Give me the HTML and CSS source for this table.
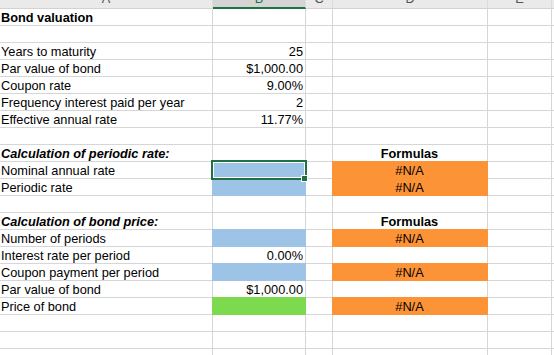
FILE: index.html
```html
<!DOCTYPE html>
<html>
<head>
<meta charset="utf-8">
<link rel="stylesheet" href="styles.css">
</head>
<body>
<div class="sheet">
  <div class="row">
    <div class="h"><span>A</span></div>
    <div class="h sel-col"><span>B</span></div>
    <div class="h"><span>C</span></div>
    <div class="h"><span>D</span></div>
    <div class="h"><span>E</span></div>
    <div class="h"></div>
  </div>
  <div class="row">
    <div class="c b">Bond valuation</div><div class="c"></div><div class="c"></div><div class="c"></div><div class="c"></div><div class="c"></div>
  </div>
  <div class="row">
    <div class="c"></div><div class="c"></div><div class="c"></div><div class="c"></div><div class="c"></div><div class="c"></div>
  </div>
  <div class="row">
    <div class="c">Years to maturity</div><div class="c r">25</div><div class="c"></div><div class="c"></div><div class="c"></div><div class="c"></div>
  </div>
  <div class="row">
    <div class="c">Par value of bond</div><div class="c r">$1,000.00</div><div class="c"></div><div class="c"></div><div class="c"></div><div class="c"></div>
  </div>
  <div class="row">
    <div class="c">Coupon rate</div><div class="c r">9.00%</div><div class="c"></div><div class="c"></div><div class="c"></div><div class="c"></div>
  </div>
  <div class="row">
    <div class="c">Frequency interest paid per year</div><div class="c r">2</div><div class="c"></div><div class="c"></div><div class="c"></div><div class="c"></div>
  </div>
  <div class="row">
    <div class="c">Effective annual rate</div><div class="c r">11.77%</div><div class="c"></div><div class="c"></div><div class="c"></div><div class="c"></div>
  </div>
  <div class="row">
    <div class="c"></div><div class="c"></div><div class="c"></div><div class="c"></div><div class="c"></div><div class="c"></div>
  </div>
  <div class="row">
    <div class="c bi">Calculation of periodic rate:</div><div class="c"></div><div class="c"></div><div class="c b m">Formulas</div><div class="c"></div><div class="c"></div>
  </div>
  <div class="row">
    <div class="c">Nominal annual rate</div><div class="c blue active"><span class="sel-box"></span><span class="sel-handle"></span></div><div class="c"></div><div class="c orange m">#N/A</div><div class="c"></div><div class="c"></div>
  </div>
  <div class="row">
    <div class="c">Periodic rate</div><div class="c blue"></div><div class="c"></div><div class="c orange m">#N/A</div><div class="c"></div><div class="c"></div>
  </div>
  <div class="row">
    <div class="c"></div><div class="c"></div><div class="c"></div><div class="c"></div><div class="c"></div><div class="c"></div>
  </div>
  <div class="row">
    <div class="c bi">Calculation of bond price:</div><div class="c"></div><div class="c"></div><div class="c b m">Formulas</div><div class="c"></div><div class="c"></div>
  </div>
  <div class="row">
    <div class="c">Number of periods</div><div class="c blue"></div><div class="c"></div><div class="c orange m">#N/A</div><div class="c"></div><div class="c"></div>
  </div>
  <div class="row">
    <div class="c">Interest rate per period</div><div class="c r">0.00%</div><div class="c"></div><div class="c"></div><div class="c"></div><div class="c"></div>
  </div>
  <div class="row">
    <div class="c">Coupon payment per period</div><div class="c blue"></div><div class="c"></div><div class="c orange m">#N/A</div><div class="c"></div><div class="c"></div>
  </div>
  <div class="row">
    <div class="c">Par value of bond</div><div class="c r">$1,000.00</div><div class="c"></div><div class="c"></div><div class="c"></div><div class="c"></div>
  </div>
  <div class="row">
    <div class="c">Price of bond</div><div class="c green"></div><div class="c"></div><div class="c orange m">#N/A</div><div class="c"></div><div class="c"></div>
  </div>
  <div class="row">
    <div class="c"></div><div class="c"></div><div class="c"></div><div class="c"></div><div class="c"></div><div class="c"></div>
  </div>
  <div class="row">
    <div class="c"></div><div class="c"></div><div class="c"></div><div class="c"></div><div class="c"></div><div class="c"></div>
  </div>
  <div class="row">
    <div class="c"></div><div class="c"></div><div class="c"></div><div class="c"></div><div class="c"></div><div class="c"></div>
  </div>
</div>
</body>
</html>
```

FILE: styles.css
```css
html, body {
  margin: 0;
  padding: 0;
  background: #fff;
  overflow: hidden;
  height: 355px;
}

.sheet {
  display: grid;
  grid-template-columns: 213px 93px 27px 155px 64px 1fr;
  grid-template-rows: 9px;
  grid-auto-rows: 17px;
  font-family: "Liberation Sans", Arial, sans-serif;
  font-size: 12.75px;
  color: #000;
}

.row {
  display: contents;
}

.h {
  box-sizing: border-box;
  background: #eaeaea;
  border-right: 1px solid #dcdcdc;
  border-bottom: 1px solid #d2d2d2;
  overflow: hidden;
  text-align: center;
  color: #555;
}

.h span {
  display: block;
  line-height: 12px;
  margin-top: -7px;
}

.h.sel-col {
  background: #d4d4d4;
  border-bottom: 2px solid #1e7145;
  color: #1e7145;
}

.c {
  box-sizing: border-box;
  border-right: 1px solid #d6d6d6;
  border-bottom: 1px solid #d6d6d6;
  padding: 0 2px 0 1px;
  line-height: 18px;
  white-space: nowrap;
  position: relative;
}

.b { font-weight: bold; }
.bi { font-weight: bold; font-style: italic; }
.r { text-align: right; }
.m { text-align: center; }

.blue {
  background: #9dc3e6;
  border-color: #9dc3e6;
  box-shadow: -1px 0 0 #9dc3e6, 0 -1px 0 #9dc3e6, -1px -1px 0 #9dc3e6;
}

.orange {
  background: #fd9337;
  border-color: #fd9337;
  box-shadow: -1px 0 0 #fd9337, 0 -1px 0 #fd9337, -1px -1px 0 #fd9337;
}

.green {
  background: #7dda4e;
  border-color: #7dda4e;
  box-shadow: -1px 0 0 #7dda4e, 0 -1px 0 #7dda4e, -1px -1px 0 #7dda4e;
}

.active { z-index: 2; }

.sel-box {
  position: absolute;
  top: -2px;
  left: -2px;
  right: -2px;
  bottom: -2px;
  border: 2px solid #1e7145;
  box-shadow: inset 0 0 0 1px #fff;
}

.sel-handle {
  position: absolute;
  left: 89px;
  top: 14px;
  width: 5px;
  height: 5px;
  background: #1e7145;
  box-shadow: 0 0 0 1px #fff;
}
```
